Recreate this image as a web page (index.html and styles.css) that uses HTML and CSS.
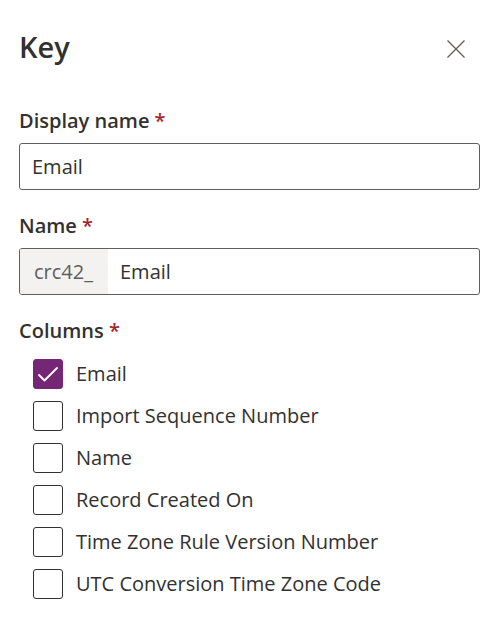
FILE: index.html
```html
<!DOCTYPE html>
<html lang="en">
<head>
<meta charset="utf-8">
<title>Key</title>
<link rel="stylesheet" href="styles.css">
</head>
<body>
<div class="panel">
  <header class="panel-header">
    <h1 class="panel-title">Key</h1>
    <button class="close-btn" type="button" aria-label="Close">
      <svg viewBox="0 0 18 18" width="18" height="18" aria-hidden="true">
        <path d="M0.5 0.5 L17.5 17.5 M17.5 0.5 L0.5 17.5" stroke="#605e5c" stroke-width="1.3" fill="none"/>
      </svg>
    </button>
  </header>

  <div class="field">
    <label class="field-label">Display name <span class="req">*</span></label>
    <div class="text-input"><span class="value">Email</span></div>
  </div>

  <div class="field">
    <label class="field-label">Name <span class="req">*</span></label>
    <div class="text-input">
      <span class="prefix">crc42_</span>
      <span class="value value-after-prefix">Email</span>
    </div>
  </div>

  <div class="field">
    <label class="field-label">Columns <span class="req">*</span></label>
    <ul class="check-list">
      <li class="check-row">
        <span class="check-box checked">
          <svg viewBox="0 0 30 30" width="30" height="30" aria-hidden="true">
            <path d="M6 16 L11.5 21.5 L24 9" stroke="#fff" stroke-width="1.8" fill="none" stroke-linecap="round" stroke-linejoin="round"/>
          </svg>
        </span>
        <span class="check-label">Email</span>
      </li>
      <li class="check-row"><span class="check-box"></span><span class="check-label">Import Sequence Number</span></li>
      <li class="check-row"><span class="check-box"></span><span class="check-label">Name</span></li>
      <li class="check-row"><span class="check-box"></span><span class="check-label">Record Created On</span></li>
      <li class="check-row"><span class="check-box"></span><span class="check-label">Time Zone Rule Version Number</span></li>
      <li class="check-row"><span class="check-box"></span><span class="check-label">UTC Conversion Time Zone Code</span></li>
    </ul>
  </div>
</div>
</body>
</html>
```

FILE: styles.css
```css
* {
  box-sizing: border-box;
}

html, body {
  margin: 0;
  padding: 0;
  background: #ffffff;
}

body {
  font-family: "Segoe UI", "Open Sans", "Noto Sans", sans-serif;
  color: #323130;
}

.panel {
  padding: 27px 18px 0 19px;
}

.panel-header {
  display: flex;
  align-items: center;
  justify-content: space-between;
  height: 40px;
  margin-bottom: 39px;
}

.panel-title {
  margin: 0;
  font-size: 29px;
  line-height: 40px;
  font-weight: 600;
  color: #323130;
}

.close-btn {
  border: 0;
  background: transparent;
  padding: 0;
  margin: 4px 15px 0 0;
  width: 18px;
  height: 18px;
  display: flex;
  cursor: pointer;
}

.field {
  margin-bottom: 21px;
}

.field-label {
  display: block;
  font-size: 20px;
  line-height: 30px;
  font-weight: 600;
  margin-bottom: 7px;
}

.req {
  color: #a4262c;
}

.text-input {
  display: flex;
  align-items: stretch;
  height: 47px;
  border: 1px solid #605e5c;
  border-radius: 3px;
  overflow: hidden;
  font-size: 20px;
}

.value {
  display: flex;
  align-items: center;
  padding-left: 12px;
  color: #323130;
}

.prefix {
  display: flex;
  align-items: center;
  width: 88px;
  padding-left: 14px;
  background: #f3f2f1;
  color: #605e5c;
}

.value-after-prefix {
  padding-left: 12px;
}

.check-list {
  list-style: none;
  margin: 5px 0 0 0;
  padding: 0 0 0 14px;
}

.check-row {
  display: flex;
  align-items: center;
  height: 42px;
  gap: 13px;
}

.check-box {
  width: 30px;
  height: 30px;
  flex: 0 0 30px;
  border: 1px solid #323130;
  border-radius: 3px;
  display: flex;
}

.check-box.checked {
  background: #742774;
  border-color: #742774;
}

.check-box.checked svg {
  margin: -1px;
}

.check-label {
  font-size: 20px;
  line-height: 42px;
  color: #323130;
}
```
